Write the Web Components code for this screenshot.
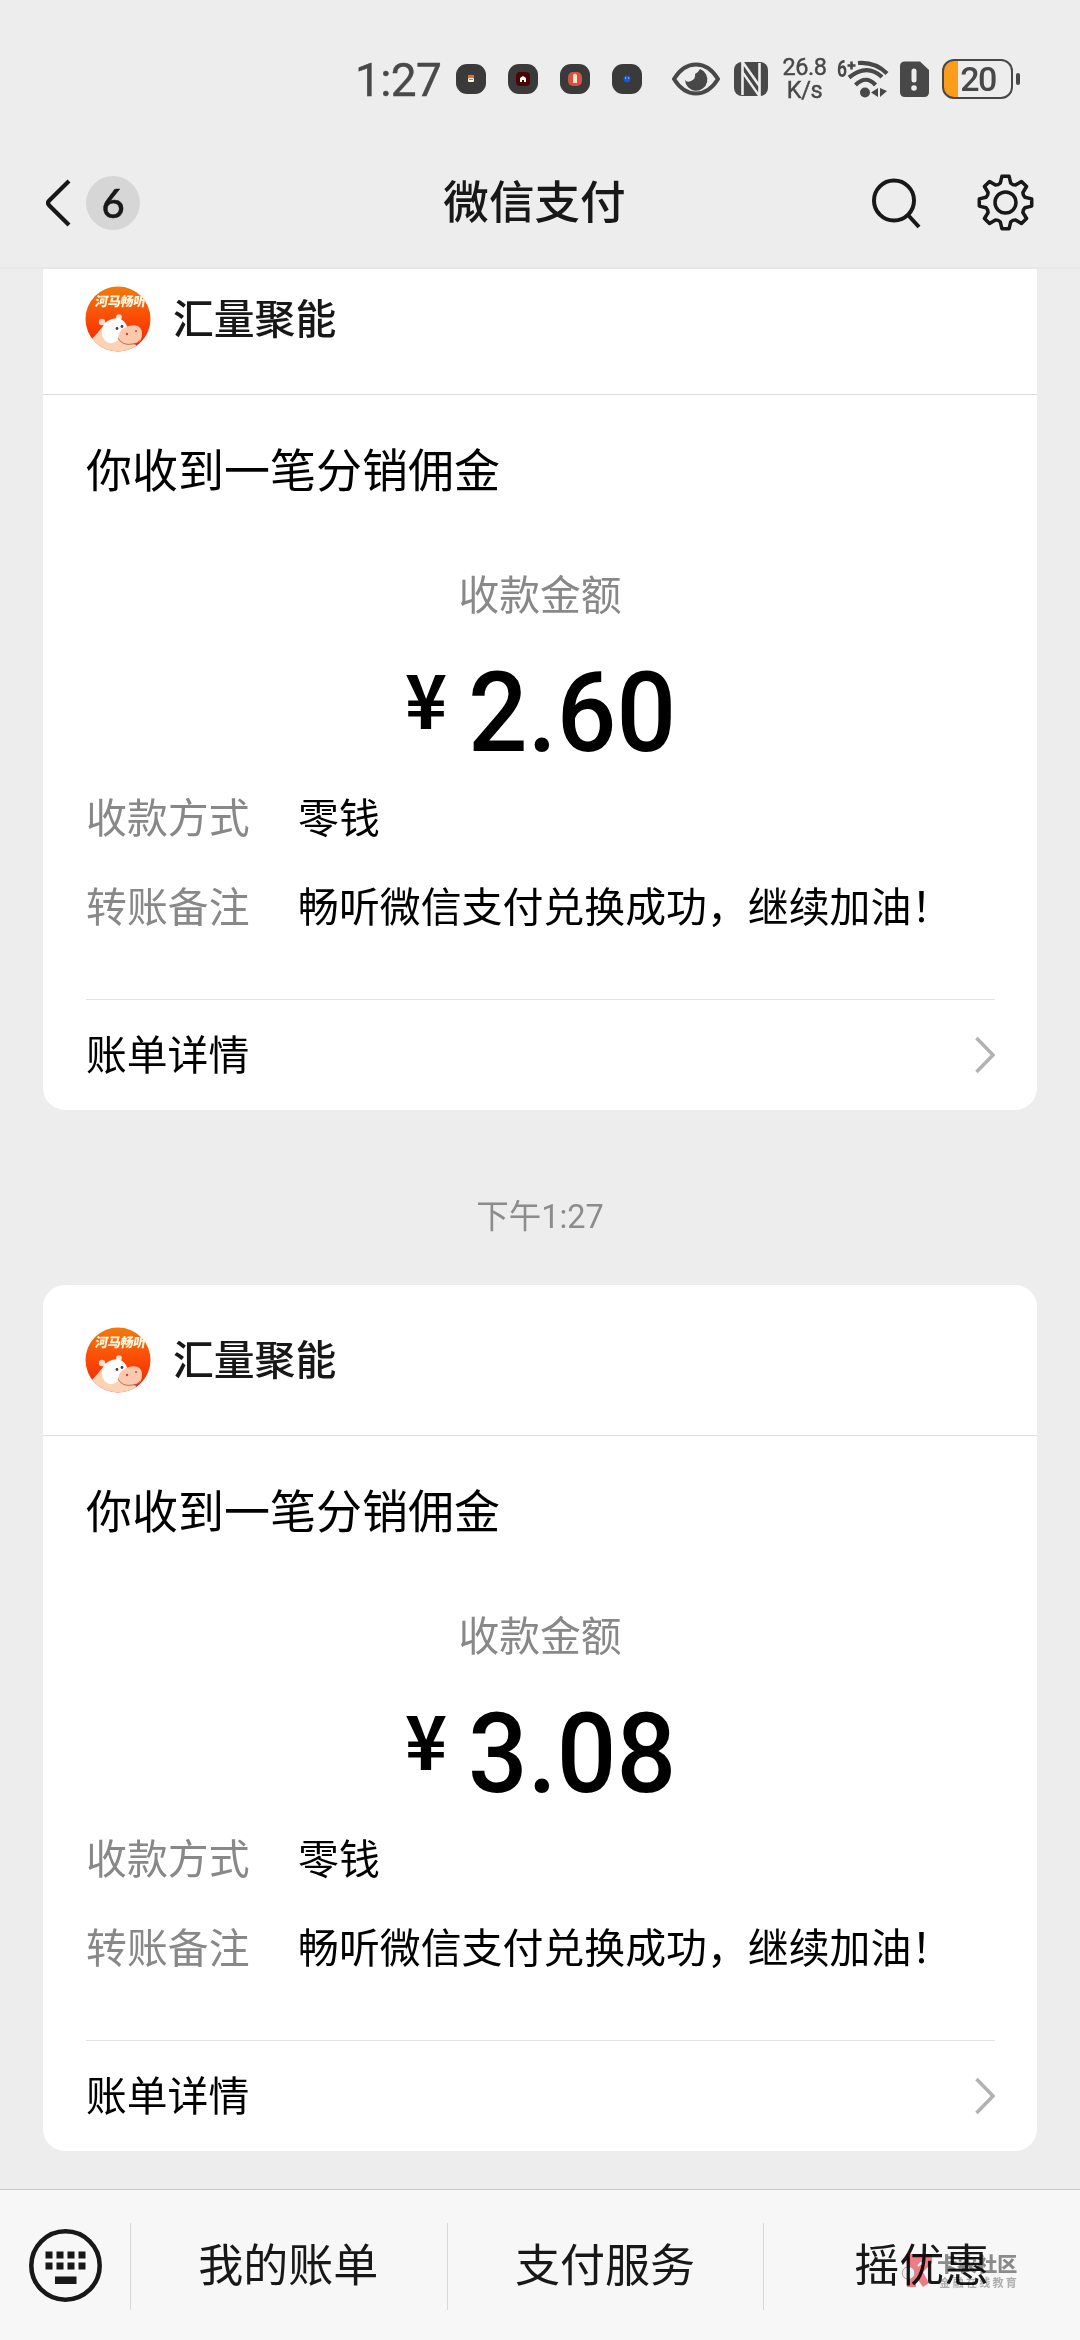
<!DOCTYPE html>
<html lang="zh-CN">
<head>
<meta charset="utf-8">
<title>微信支付</title>
<style>
html,body{margin:0;padding:0;background:#ededed}
body{width:1080px;height:2340px;overflow:hidden;font-family:Roboto,"Noto Sans CJK SC",sans-serif;color:#000}
</style>
</head>
<body>
<pay-screen></pay-screen>
<script>
const define = (name, html) => {
  const t = document.createElement('template');
  t.innerHTML = html;
  customElements.define(name, class extends HTMLElement {
    constructor() {
      super();
      this.attachShadow({mode: 'open'}).append(t.content.cloneNode(true));
    }
  });
};

/* Eight-tooth gear outline centred on 0,0 */
const gear = (() => {
  const tooth = [[-5.2,-19.4],[-3.6,-26.2],[3.6,-26.2],[5.2,-19.4],[7.4,-17.9]];
  const pts = [];
  for (let i = 0; i < 8; i++) {
    const a = i * Math.PI / 4, c = Math.cos(a), s = Math.sin(a);
    for (const [x, y] of tooth) pts.push((x*c - y*s).toFixed(2) + ' ' + (x*s + y*c).toFixed(2));
  }
  return 'M' + pts.join('L') + 'Z';
})();

define('status-app', `<style>
:host{display:flex;width:30px;height:30px;border-radius:11px;background:#3a3a3a;align-items:center;justify-content:center}
</style><slot></slot>`);

define('status-bar', `<style>
:host{display:flex;height:158px;box-sizing:border-box;padding:0 57px 0 355px;align-items:center;color:#484848;font-family:Roboto,sans-serif;flex:none}
svg{display:block;flex:none}
.time{width:101px;font-size:46px;line-height:46px;white-space:nowrap;letter-spacing:-.6px;margin-top:2px;-webkit-text-stroke:.4px #484848}
.apps{display:flex;gap:22px;width:216px}
.eye{width:62px}.nfc{width:47px}
.speed{width:47px;margin-right:9px;font-size:23.5px;text-align:center;letter-spacing:-.4px;white-space:nowrap;-webkit-text-stroke:.4px #484848}
.speed span{display:block;line-height:23px}
.wifi{width:63px;overflow:visible}.sim{width:42px}
.batt{display:flex;align-items:center;gap:3px}
.cell{box-sizing:border-box;width:71px;height:40px;border:2.5px solid #484848;border-radius:12px;background:linear-gradient(90deg,#fc9c1c 14px,transparent 14px);font-size:34px;line-height:36px;font-weight:500;text-align:center;letter-spacing:-1.5px;padding-left:1px}
.tip{width:4px;height:12px;border-radius:2px;background:#484848}
</style>
<div class="time">1:27</div>
<div class="apps">
<status-app><svg width="8" height="8"><rect x="1" width="6" height="3" fill="#ed6b25"/><rect x="1" y="3" width="6" height="4" rx="1" fill="#fff1df"/><rect x="2" y="4" width="4" height="1" fill="#c97b40"/></svg></status-app>
<status-app><svg width="14" height="14"><rect width="14" height="14" rx="4" fill="#4b0505"/><path d="M7 4L10 6V10H8V8H6V10H4V6Z" fill="#fff"/></svg></status-app>
<status-app><svg width="16" height="16"><rect x="1" y="1" width="14" height="14" rx="5" fill="#d35245"/><path d="M6 4Q8 1 10 4V12H6Z" fill="#ffe3c8"/></svg></status-app>
<status-app><svg width="8" height="8"><circle cx="4" cy="4" r="3.4" fill="#1759cc"/><path d="M2 3H3.3M5 3H6.3" stroke="#c8e3ff"/></svg></status-app>
</div>
<svg class="eye" width="62" height="36" viewBox="0 0 62 36"><path d="M2 18Q11 3.5 24 3.5T46 18Q37 32.5 24 32.5T2 18Z" fill="none" stroke="#484848" stroke-width="4" stroke-linejoin="round"/><path d="M28 8A11.2 11.2 0 1 1 13 19Q15 22 19 20Q24 18 23 13Q26 12 28 8Z" fill="#484848"/></svg>
<svg class="nfc" width="47" height="36" viewBox="0 0 47 36"><rect y="1" width="34" height="34" rx="8" fill="#484848"/><path d="M8.5 1V34M25.5 2V35" stroke="#ededed" stroke-width="2.6"/><path d="M8.5 1L25.5 25M8.5 11L25.5 35" stroke="#ededed" stroke-width="2.6"/><path d="M10 6L24 27V31L10 11Z" fill="#484848"/></svg>
<div class="speed"><span>26.8</span><span>K/s</span></div>
<svg class="wifi" width="63" height="40" viewBox="0 0 63 40"><text x="0" y="17.500" font-family="Roboto" font-size="23" font-weight="700" fill="#484848" textLength="10" lengthAdjust="spacingAndGlyphs">6</text><path d="M10.500 6.500H18.500M14.500 2.500V10.500" stroke="#484848" stroke-width="2.600"/><g fill="none" stroke="#484848" stroke-width="4.200"><path d="M21 4Q38 2.500 50 14.500"/><path d="M12 18.500Q30 4 45 18"/><path d="M18.500 26Q29 15.500 38.500 26"/></g><circle cx="28" cy="33.500" r="5" fill="#484848"/><path d="M41 29V38L34 33.500ZM43 29V38L50 32Z" fill="#484848"/></svg>
<svg class="sim" width="42" height="36" viewBox="0 0 42 36"><path d="M5 .5H20L29 9V31Q29 36 24 36H5Q0 36 0 31V5Q0 .5 5 .5Z" fill="#484848"/><path d="M14 10V19" stroke="#ededed" stroke-width="5" stroke-linecap="round"/><circle cx="14" cy="27" r="2.800" fill="#ededed"/></svg>
<div class="batt"><div class="cell">20</div><div class="tip"></div></div>`);

define('nav-bar', `<style>
:host{display:grid;grid-template-columns:1fr auto 1fr;height:111px;box-sizing:border-box;padding:0 46px 20px;align-items:center;border-bottom:2px solid #e7e7e7;flex:none;color:#181818}
svg{display:block}
.back{display:flex;align-items:center;gap:15px}
.badge{width:54px;height:54px;border-radius:50%;background:#d6d6d6;text-align:center;font:500 40px/55px Lato,sans-serif;-webkit-text-stroke:.5px #181818}
.title{font:500 45.600px/66px "Noto Sans CJK SC",sans-serif;margin:-7px 11px 0 0}
.tools{display:flex;justify-content:flex-end;align-items:center;gap:56px}
</style>
<div class="back"><svg width="25" height="48" viewBox="0 0 25 48"><path d="M23 2L3.300 21.400Q.7 24 3.300 26.600L23 46" fill="none" stroke="#181818" stroke-width="4.200"/></svg><div class="badge"><slot name="count"></slot></div></div>
<div class="title"><slot></slot></div>
<div class="tools">
<svg width="50" height="56" viewBox="0 0 50 56"><g fill="none" stroke="#181818" stroke-width="4"><circle cx="23" cy="25.500" r="20"/><path d="M37 40L48 52"/></g></svg>
<svg width="57" height="57" viewBox="-28.500 -28.500 57 57"><g fill="none" stroke="#181818" stroke-width="3.500" stroke-linejoin="round"><path d="${gear}"/><circle r="10.500"/></g></svg>
</div>`);

define('hippo-avatar', `<style>
:host{display:block;width:66px;height:66px;flex:none}svg{display:block}
</style>
<svg width="66" height="66" viewBox="0 0 66 66">
<defs><linearGradient id="g" x2="0" y2="1"><stop stop-color="#f27b0c"/><stop offset=".5" stop-color="#fb4a05"/><stop offset="1" stop-color="#ee2208"/></linearGradient><clipPath id="c"><circle cx="33" cy="33" r="32.500"/></clipPath></defs>
<g clip-path="url(#c)"><rect width="66" height="66" fill="url(#g)"/>
<path d="M5 55Q12 48 19 39L38 56L53 59L42 68H10Z" fill="#fbd3b4"/>
<circle cx="17" cy="36" r="3.200" fill="#fbd9c8"/><circle cx="34" cy="31" r="2.800" fill="#fbe9e0"/>
<path d="M17 43Q19 35 27 33Q36 30 41 38L44 45Q37 47 33 54Q28 59 22 56Q16 52 17 43Z" fill="#fff"/>
<path d="M50 55L55 57Q54 62 51 60Z" fill="#ec213f"/>
<path d="M33 51Q35 42 44 40Q56 37 57 47Q58 57 48 58Q36 61 33 51Z" fill="#fdc9ac"/>
<path d="M33 52Q37 60 48 58Q52 58 55 54" fill="none" stroke="#9c4b37" stroke-width=".7"/>
<g fill="#54393c"><circle cx="32" cy="42.500" r="1.400"/><circle cx="37" cy="40.500" r="1.400"/></g><circle cx="42" cy="48" r="1.200" fill="#c5463c"/><circle cx="51" cy="45" r="1" fill="#c5463c"/>
</g>
<g transform="translate(9.500 20) skewX(-10)"><text font-family="Noto Sans CJK SC" font-weight="900" font-size="13" fill="#fff6e0" textLength="51">河马畅听</text></g>
</svg>`);

define('detail-row', `<style>
:host{display:flex;height:89px;align-items:center;font-size:40.900px;line-height:60px;white-space:nowrap}
.k{width:212px;color:#888}
</style><span class="k"><slot name="label"></slot></span><span><slot></slot></span>`);

define('pay-card', `<style>
:host{display:flex;flex-direction:column;height:866px;background:#fff;border-radius:22px;flex:none;margin:0 43px;font-family:"Noto Sans CJK SC",sans-serif}
header{display:flex;align-items:center;gap:22px;height:150px;padding:0 42px;border-bottom:1px solid #dedede}
.name{font-size:40.800px;font-weight:500;line-height:60px;color:#181818;margin-top:-4px}
.body{flex:1;padding:0 43px;display:flex;flex-direction:column}
.title{height:150px;line-height:145px;font-size:46px}
.label{height:102px;line-height:96px;text-align:center;font-size:40.800px;color:#888}
.amount{height:126px;display:flex;align-items:center;justify-content:center;gap:21px}
.yen{font-size:75px;font-weight:700;line-height:80px;margin-top:-26px;margin-left:-2px;transform:scaleX(.95)}
.num{font:500 111px/130px Roboto,sans-serif;margin:5px -8px 0;transform:scaleX(.945)}
.rows{flex:1;margin-top:-2px}
footer{display:flex;align-items:center;justify-content:space-between;margin:0 42px 0 43px;height:110px;border-top:1px solid #e3e3e3;font-size:40.800px;line-height:60px}
footer span{margin:-4px 0 0 0}
</style>
<header><hippo-avatar></hippo-avatar><span class="name"><slot name="name"></slot></span></header>
<div class="body">
<div class="title"><slot name="title"></slot></div>
<div class="label">收款金额</div>
<div class="amount"><span class="yen">¥</span><span class="num"><slot name="amount"></slot></span></div>
<div class="rows"><slot></slot></div>
</div>
<footer><span>账单详情</span><svg width="21" height="38" viewBox="0 0 21 38"><path d="M2.500 2L19 19L2.500 36" fill="none" stroke="#b2b2b2" stroke-width="3.500"/></svg></footer>`);

define('time-stamp', `<style>
:host{display:block;height:175px;flex:none;text-align:center;font:32.500px/214px Roboto,"Noto Sans CJK SC",sans-serif;color:#8c8c8c}
</style><slot></slot>`);

define('source-mark', `<style>
:host{position:absolute;left:138px;top:62px;display:flex;gap:5px;align-items:center;mix-blend-mode:multiply;font-family:"Noto Sans CJK SC",sans-serif;color:#8f8f8f;white-space:nowrap}
svg{display:block}
b{display:block;font-size:20px;line-height:23px;font-weight:900}
small{display:block;font-size:11px;line-height:14px;font-weight:700;letter-spacing:2.300px;color:#b5b5b5;padding-left:2px}
</style>
<svg width="31" height="36" viewBox="0 0 31 36"><path d="M5 1H31V10L22 19L28 30L22 34L15 24V34H6V25L2 21L6 14Z" fill="#f77f8b"/><circle cx="7.500" cy="20" r="6.300" fill="#f5f5f5" stroke="#a9a9a9"/><path d="M17 13L20 10L22 12" stroke="#fff" stroke-width="2" fill="none"/></svg>
<div><b>卡农社区</b><small>金融在线教育</small></div>`);

define('menu-item', `<style>
:host{position:relative;display:flex;flex:1;height:151px;align-items:center;justify-content:center;font:45px/66px "Noto Sans CJK SC",sans-serif;color:#181818}
:host::before{content:"";position:absolute;left:0;top:33px;width:1px;height:87px;background:#d8d8d8}
span{margin-top:-5px}
</style><span><slot></slot></span><slot name="mark"></slot>`);

define('menu-bar', `<style>
:host{display:flex;height:151px;box-sizing:border-box;border-top:1px solid #c8c8c8;background:#f7f7f7;flex:none}
.key{width:130px;box-sizing:border-box;padding-left:29px;display:flex;align-items:center}
</style>
<div class="key"><svg width="73" height="73" viewBox="0 0 73 73"><circle cx="36.500" cy="36.500" r="34.200" fill="none" stroke="#181818" stroke-width="4.500"/><path d="M16.500 22.500h7v7h-7zM27.500 22.500h7v7h-7zM38.500 22.500h7v7h-7zM49.500 22.500h7v7h-7zM16.500 33.500h7v7h-7zM27.500 33.500h7v7h-7zM38.500 33.500h7v7h-7zM49.500 33.500h7v7h-7zM26 47.500h21.500v7.500H26z" fill="#181818"/></svg></div>
<slot></slot>`);

define('pay-screen', `<style>
:host{display:flex;flex-direction:column;width:1080px;height:2340px;background:#ededed;overflow:hidden}
main{flex:1;min-height:0;display:flex;flex-direction:column;justify-content:flex-end;overflow:hidden;padding-bottom:38px;box-sizing:border-box}
</style>
<status-bar></status-bar>
<nav-bar><span slot="count">6</span>微信支付</nav-bar>
<main>
<pay-card><span slot="name">汇量聚能</span><span slot="title">你收到一笔分销佣金</span><span slot="amount">2.60</span>
<detail-row><span slot="label">收款方式</span>零钱</detail-row>
<detail-row><span slot="label">转账备注</span>畅听微信支付兑换成功，继续加油！</detail-row></pay-card>
<time-stamp>下午1:27</time-stamp>
<pay-card><span slot="name">汇量聚能</span><span slot="title">你收到一笔分销佣金</span><span slot="amount">3.08</span>
<detail-row><span slot="label">收款方式</span>零钱</detail-row>
<detail-row><span slot="label">转账备注</span>畅听微信支付兑换成功，继续加油！</detail-row></pay-card>
</main>
<menu-bar><menu-item>我的账单</menu-item><menu-item>支付服务</menu-item><menu-item>摇优惠<source-mark slot="mark"></source-mark></menu-item></menu-bar>`);
</script>
</body>
</html>
